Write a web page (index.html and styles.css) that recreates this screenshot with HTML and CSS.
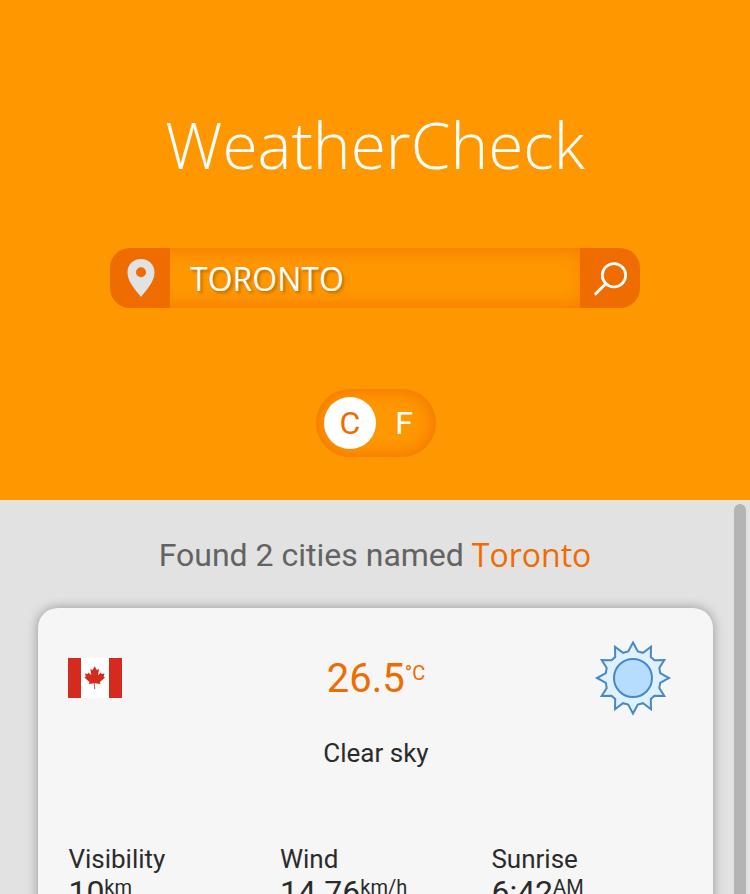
FILE: index.html
```html
<!DOCTYPE html>
<html lang="en">
<head>
<meta charset="utf-8">
<title>WeatherCheck</title>
<link rel="stylesheet" href="styles.css">
</head>
<body>
<header class="hero">
  <h1 class="title">WeatherCheck</h1>
  <div class="search">
    <div class="side">
      <svg width="60" height="60" viewBox="0 0 60 60"><path fill="#e2e2e2" fill-rule="evenodd" d="M31 11C23.200 11 17.500 16.700 17.500 24.300C17.500 33.500 25 41.500 31 49C37 41.500 44.500 33.500 44.500 24.300C44.500 16.700 38.800 11 31 11ZM31 19.200A5 5 0 1 1 31 29.200A5 5 0 1 1 31 19.200Z"/></svg>
    </div>
    <div class="query">TORONTO</div>
    <div class="side">
      <svg width="60" height="60" viewBox="0 0 60 60" fill="none" stroke="#fff" stroke-width="2.700"><circle cx="34" cy="27.300" r="11.700"/><path d="M25.700 35.800L15.700 45.800" stroke-width="3" stroke-linecap="round"/></svg>
    </div>
  </div>
  <div class="units"><span class="unit on">C</span><span class="unit">F</span></div>
</header>
<main class="results">
  <h2 class="found">Found 2 cities named <span class="city">Toronto</span></h2>
  <section class="card">
    <div class="top">
      <svg class="flag" width="54" height="40" viewBox="0 0 54 40"><path fill="#fff" d="M0 0h54v40H0z"/><path fill="#d52b1e" d="M0 0h13v40H0zM41 0h13v40H41z"/><path fill="#d52b1e" d="M26.700 8.200L28.800 12.100L31 11L30.100 17.200L32.900 14.400L33.500 15.900L36.500 15.400L35.600 18.600L37 19.400L31.900 24L32.500 26L27 25.200L27.200 31H26.200L26.400 25.200L20.900 26L21.500 24L16.400 19.400L17.800 18.600L16.900 15.400L19.900 15.900L20.500 14.400L23.300 17.200L22.400 11L24.600 12.100Z"/></svg>
      <div class="temp">26.5<span class="deg">°C</span></div>
      <svg class="sun" width="80" height="80" viewBox="-40 -40 80 80" stroke="#4788c7" stroke-width="2"><path fill="#dff0fe" d="M0-35.500L4.800-26.500L10-25.200L18-31.300L17.800-21L21.500-17.700L31.300-18L26.300-10L27.200-4.800L36 0L27.200 4.800L26.300 10L31.300 18L21.500 17.700L17.800 21L18 31.300L10 25.200L4.800 26.500L0 35.500L-4.800 26.500L-10 25.200L-18 31.300L-17.800 21L-21.500 17.700L-31.300 18L-26.300 10L-27.200 4.800L-36 0L-27.200-4.800L-26.300-10L-31.300-18L-21.500-17.700L-17.800-21L-18-31.300L-10-25.200L-4.800-26.500Z"/><circle r="19" fill="#b6dcfe"/></svg>
    </div>
    <p class="sky">Clear sky</p>
    <div class="stats">
      <div><div class="label">Visibility</div><div class="value">10<span class="small">km</span></div></div>
      <div><div class="label">Wind</div><div class="value">14.76<span class="small">km/h</span></div></div>
      <div><div class="label">Sunrise</div><div class="value">6:42<span class="small">AM</span></div></div>
    </div>
  </section>
  <div class="thumb"></div>
</main>
</body>
</html>
```
FILE: styles.css
```css
* { box-sizing: border-box; }
body {
  margin: 0;
  height: 894px;
  overflow: hidden;
  font-family: Roboto, sans-serif;
  color: #2b2b2b;
}
h1, h2, p { margin: 0; font-weight: 400; }
svg { display: block; }
.hero {
  height: 500px;
  padding-top: 101px;
  background: #ff9800;
  display: flex;
  flex-direction: column;
  align-items: center;
}
.title {
  font: 300 64px/88px "Open Sans", sans-serif;
  color: #fff;
}
.search {
  display: flex;
  width: 530px;
  height: 60px;
  margin-top: 59px;
  border-radius: 20px;
  overflow: hidden;
}
.side { z-index: 1; width: 60px; background: #ef6c00; }
.query {
  flex: 1;
  margin: 0 -6px 0 -20px;
  padding: 0 0 0 40px;
  font: 400 32px/61px "Open Sans", sans-serif;
  color: #fff;
  text-shadow: 2px 2px 3px rgba(150, 75, 0, .6);
  box-shadow: inset 0 0 20px rgba(239, 108, 0, .85);
}
.units {
  display: flex;
  align-items: center;
  width: 120px;
  height: 68px;
  margin: 81px 0 0 2px;
  padding-left: 8px;
  border-radius: 34px;
  box-shadow: inset 0 0 20px rgba(239, 108, 0, .95);
}
.unit {
  width: 52px;
  height: 52px;
  border-radius: 50%;
  font-size: 32px;
  line-height: 52px;
  text-align: center;
  color: #fff;
}
.on { background: #fff; color: #ef6c00; }
.unit + .unit { margin-left: 2px; }
.results {
  position: relative;
  height: 394px;
  overflow: hidden;
  background: #e2e2e2;
}
.found {
  height: 80px;
  padding-top: 29px;
  font-size: 32px;
  line-height: 50px;
  text-align: center;
  color: #636363;
}
.city {
  position: relative;
  top: 1px;
  font-family: "Open Sans", sans-serif;
  color: #ef6c00;
}
.card {
  width: 675px;
  height: 600px;
  margin: 28px 0 0 38px;
  padding: 30px;
  border-radius: 20px;
  background: #f6f6f6;
  box-shadow: 0 0 12px rgba(0, 0, 0, .35);
}
.top {
  display: grid;
  grid-template-columns: 1fr auto 1fr;
  align-items: center;
  height: 80px;
}
.temp {
  display: flex;
  padding: 2px 0 0 1px;
  font-size: 40px;
  line-height: 48px;
  color: #ef6c00;
}
.deg { font-size: 20px; line-height: 36px; }
.sun { justify-self: end; margin-right: 10px; }
.sky {
  margin-top: 20px;
  padding-left: 1px;
  font-size: 26px;
  line-height: 30px;
  text-align: center;
}
.stats {
  display: grid;
  grid-template-columns: 211.500px 211.500px 1fr;
  margin: 76px 0 0 .4px;
}
.label { font-size: 26px; line-height: 30px; }
.value { display: flex; font-size: 32px; line-height: 36px; }
.small { font-size: 20px; line-height: 27px; }
.thumb {
  position: absolute;
  top: 4px;
  right: 4px;
  width: 12px;
  height: 500px;
  border-radius: 6px;
  background: #b4b4b4;
}
```
